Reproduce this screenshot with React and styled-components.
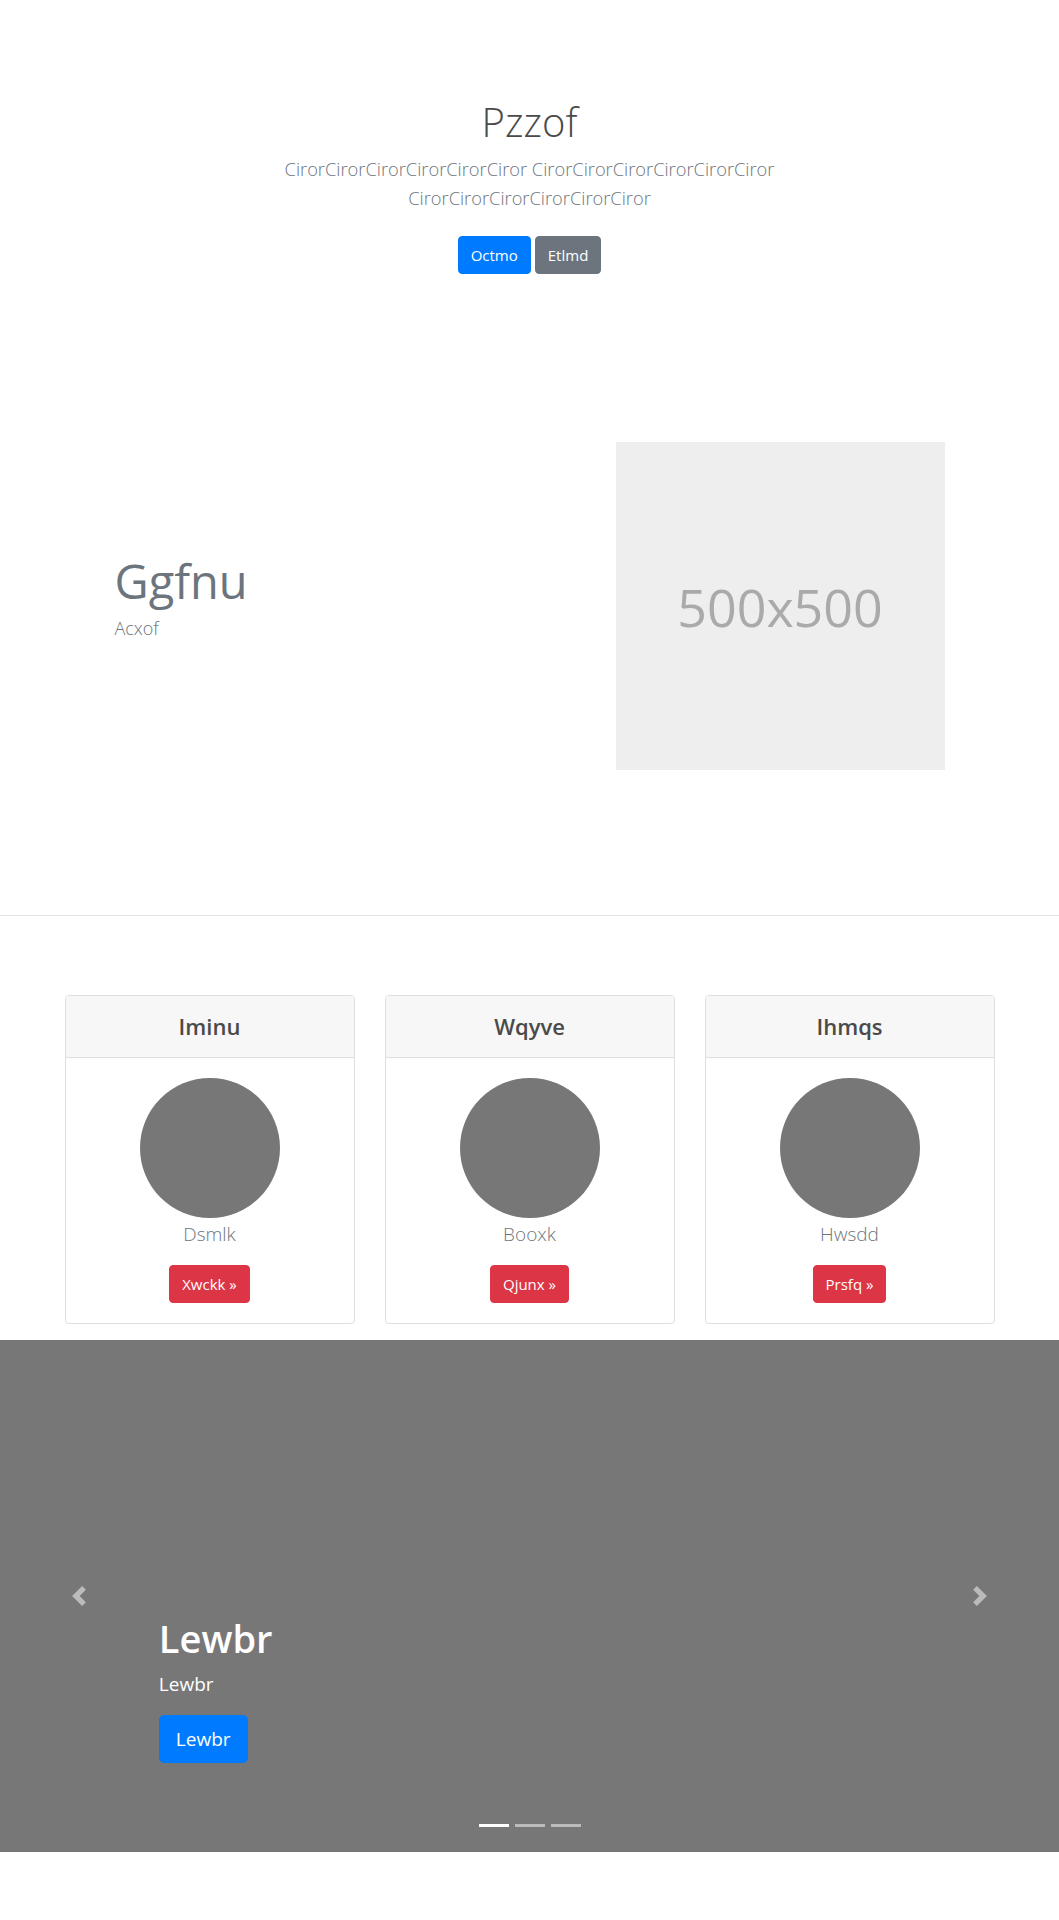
import React from 'react';
import styled, { createGlobalStyle } from 'styled-components';

const GlobalStyle = createGlobalStyle`
  * { box-sizing: border-box; }
  body {
    margin: 0;
    background: #fff;
    font-family: "Open Sans", "Noto Sans", "Liberation Sans", sans-serif;
    color: #212529;
  }
`;

const Page = styled.div`
  width: 100%;
  padding-bottom: 68px;
`;

const Container = styled.div`
  width: 960px;
  margin: 0 auto;
  padding: 0 15px;
`;

/* hero */
const Hero = styled.section`
  padding-top: 97px;
  text-align: center;
`;

const HeroTitle = styled.h1`
  margin: 0;
  font-size: 40px;
  line-height: 50px;
  font-weight: 300;
  color: #4a4a4a;
`;

const Lead = styled.p`
  max-width: 620px;
  margin: 7px auto 0;
  font-size: 18.3px;
  line-height: 29px;
  font-weight: 300;
  color: #6c757d;
`;

const ButtonRow = styled.div`
  display: flex;
  justify-content: center;
  gap: 4px;
  margin-top: 24px;
`;

const Button = styled.a`
  display: inline-block;
  padding: ${(p) => (p.$size === 'lg' ? '8px 16px' : '6px 12px')};
  font-size: ${(p) => (p.$size === 'lg' ? '19px' : '15px')};
  line-height: ${(p) => (p.$size === 'lg' ? '30px' : '24px')};
  border: 1px solid ${(p) => p.$bg};
  border-radius: ${(p) => (p.$size === 'lg' ? '5px' : '4px')};
  background: ${(p) => p.$bg};
  color: #fff;
  text-decoration: none;
  font-weight: 400;
  cursor: pointer;
`;

/* feature */
const Feature = styled.section`
  padding: 168px 0 145px;
`;

const FeatureRow = styled.div`
  display: flex;
  align-items: center;
`;

const FeatureText = styled.div`
  flex: 1;
  padding: 0 0 20px 50px;
`;

const FeatureHeading = styled.h2`
  margin: 0 0 5px;
  font-size: 47px;
  line-height: 58px;
  font-weight: 400;
  color: #6c757d;
`;

const FeatureSub = styled.p`
  margin: 0;
  font-size: 18px;
  line-height: 26px;
  font-weight: 300;
  color: #6c757d;
`;

const FeatureMedia = styled.div`
  flex: 1;
  display: flex;
  justify-content: center;
  padding-left: 22px;
`;

const Placeholder = styled.div`
  width: 329px;
  height: 328px;
  background: #eee;
  display: flex;
  align-items: center;
  justify-content: center;
  font-size: 52px;
  color: #aaa;
  font-weight: 400;
`;

const Divider = styled.hr`
  margin: 0;
  border: 0;
  border-top: 1px solid #e5e5e5;
`;

/* cards */
const Cards = styled.section`
  padding: 79px 0 16px;
`;

const CardGrid = styled.div`
  display: grid;
  grid-template-columns: repeat(3, 1fr);
  gap: 30px;
`;

const Card = styled.div`
  border: 1px solid #dfdfdf;
  border-radius: 4px;
  overflow: hidden;
  text-align: center;
`;

const CardHeader = styled.div`
  background: #f7f7f7;
  border-bottom: 1px solid #dfdfdf;
  padding: 16px 20px;
`;

const CardTitle = styled.h4`
  margin: 0;
  font-size: 22px;
  line-height: 29px;
  font-weight: 600;
  color: #4a4a4a;
`;

const CardBody = styled.div`
  padding: 20px;
  display: flex;
  flex-direction: column;
  align-items: center;
`;

const Avatar = styled.div`
  width: 140px;
  height: 140px;
  border-radius: 50%;
  background: #777;
`;

const Name = styled.p`
  margin: 1px 0 16px;
  font-size: 19px;
  line-height: 30px;
  font-weight: 300;
  color: #6c757d;
`;

/* carousel */
const Carousel = styled.section`
  position: relative;
  height: 512px;
  background: #777;
  overflow: hidden;
`;

const Caption = styled.div`
  position: absolute;
  left: 15%;
  right: 15%;
  bottom: 69px;
  padding: 20px 0;
  color: #fff;
  text-align: left;
`;

const CaptionTitle = styled.h1`
  margin: 0 0 7px;
  font-size: 38px;
  line-height: 48px;
  font-weight: 600;
`;

const CaptionText = styled.p`
  margin: 0 0 16px;
  font-size: 19px;
  line-height: 30px;
  font-weight: 400;
`;

const Control = styled.button`
  position: absolute;
  top: 0;
  bottom: 0;
  ${(p) => (p.$side === 'prev' ? 'left: 0;' : 'right: 0;')}
  width: 15%;
  display: flex;
  align-items: center;
  justify-content: center;
  background: none;
  border: 0;
  padding: 0;
  opacity: 0.5;
  cursor: pointer;
`;

const Indicators = styled.ol`
  position: absolute;
  left: 0;
  right: 0;
  bottom: 25px;
  display: flex;
  justify-content: center;
  margin: 0;
  padding: 0;
  list-style: none;
`;

const Indicator = styled.li`
  width: 30px;
  height: 3px;
  margin: 0 3px;
  background: ${(p) => (p.$active ? '#fff' : 'rgba(255, 255, 255, 0.5)')};
`;

const Chevron = ({ dir }) => (
  <svg width="20" height="20" viewBox="0 0 8 8" fill="#fff">
    {dir === 'prev' ? (
      <path d="M5.25 0l-4 4 4 4 1.5-1.5-2.5-2.5 2.5-2.5-1.5-1.5z" />
    ) : (
      <path d="M2.75 0l-1.5 1.5 2.5 2.5-2.5 2.5 1.5 1.5 4-4-4-4z" />
    )}
  </svg>
);

const cards = [
  { title: 'Iminu', name: 'Dsmlk', cta: 'Xwckk' },
  { title: 'Wqyve', name: 'Booxk', cta: 'Qjunx' },
  { title: 'Ihmqs', name: 'Hwsdd', cta: 'Prsfq' },
];

export default function App() {
  return (
    <Page>
      <GlobalStyle />
      <Hero>
        <HeroTitle>Pzzof</HeroTitle>
        <Lead>
          CirorCirorCirorCirorCirorCiror CirorCirorCirorCirorCirorCiror
          CirorCirorCirorCirorCirorCiror
        </Lead>
        <ButtonRow>
          <Button $bg="#007bff">Octmo</Button>
          <Button $bg="#6c757d">Etlmd</Button>
        </ButtonRow>
      </Hero>

      <Feature>
        <Container>
          <FeatureRow>
            <FeatureText>
              <FeatureHeading>Ggfnu</FeatureHeading>
              <FeatureSub>Acxof</FeatureSub>
            </FeatureText>
            <FeatureMedia>
              <Placeholder>500x500</Placeholder>
            </FeatureMedia>
          </FeatureRow>
        </Container>
      </Feature>

      <Divider />

      <Cards>
        <Container>
          <CardGrid>
            {cards.map((c) => (
              <Card key={c.title}>
                <CardHeader>
                  <CardTitle>{c.title}</CardTitle>
                </CardHeader>
                <CardBody>
                  <Avatar />
                  <Name>{c.name}</Name>
                  <Button $bg="#dc3545">{c.cta} »</Button>
                </CardBody>
              </Card>
            ))}
          </CardGrid>
        </Container>
      </Cards>

      <Carousel>
        <Caption>
          <CaptionTitle>Lewbr</CaptionTitle>
          <CaptionText>Lewbr</CaptionText>
          <Button $bg="#007bff" $size="lg">Lewbr</Button>
        </Caption>
        <Control $side="prev" aria-label="Previous">
          <Chevron dir="prev" />
        </Control>
        <Control $side="next" aria-label="Next">
          <Chevron dir="next" />
        </Control>
        <Indicators>
          <Indicator $active />
          <Indicator />
          <Indicator />
        </Indicators>
      </Carousel>
    </Page>
  );
}
